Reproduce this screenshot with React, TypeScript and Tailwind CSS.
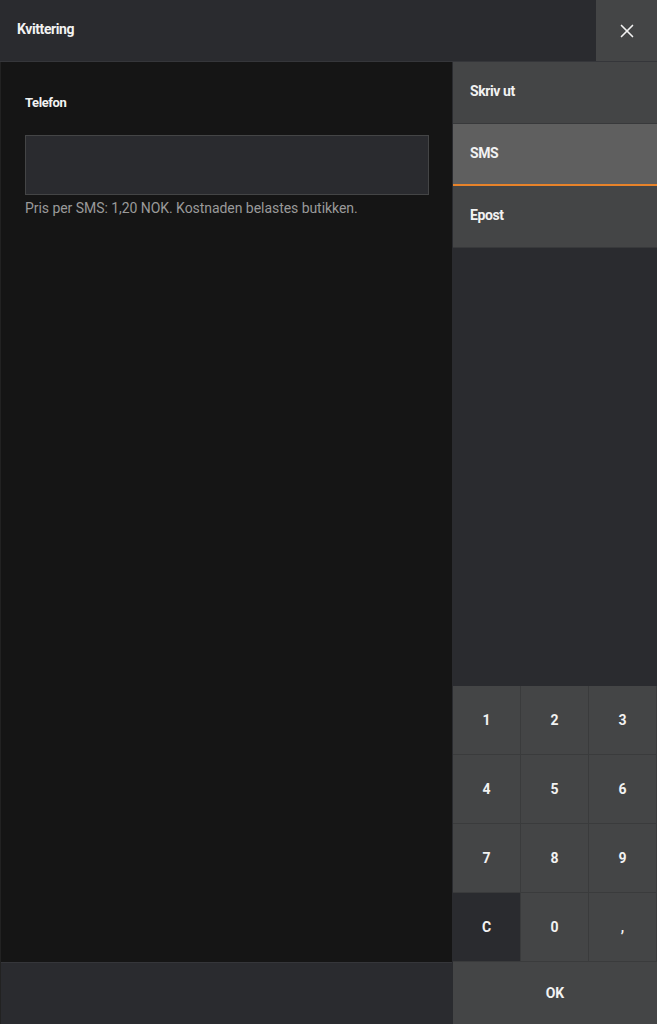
import { X } from 'lucide-react'

const keys = ['1', '2', '3', '4', '5', '6', '7', '8', '9', 'C', '0', ',']

function Tab({ label, active }: { label: string; active?: boolean }) {
  return (
    <div
      className={
        active
          ? 'flex h-[62px] items-center border-b-2 border-[#e8832a] bg-[#5f5f5f] px-[17px] pb-[2px] text-[14px] font-bold tracking-[-0.4px] text-[#f2f2f2]'
          : 'flex h-[62px] items-center border-b border-[#38393b] bg-[#444546] px-[17px] pb-[3px] text-[14px] font-bold tracking-[-0.4px] text-[#f2f2f2]'
      }
    >
      {label}
    </div>
  )
}

export default function App() {
  return (
    <div
      className="flex h-[1024px] w-[657px] flex-col bg-[#151515] text-white"
      style={{ fontFamily: 'Roboto, "Liberation Sans", sans-serif' }}
    >
      <div className="flex h-[62px] shrink-0 border-b border-[#35363a] bg-[#2a2b2f]">
        <div className="flex flex-1 items-center px-[17px] pb-[3px] text-[14px] font-bold tracking-[-0.4px] text-[#f2f2f2]">
          Kvittering
        </div>
        <button className="flex w-[61px] items-center justify-center bg-[#444546] text-[#f2f2f2]">
          <X size={22} strokeWidth={1.8} />
        </button>
      </div>

      <div className="flex min-h-0 flex-1">
        <div className="flex w-[453px] flex-col border-l border-[#222] border-r border-r-[#2a2b2f]">
          <div className="flex-1 px-6 pt-[31px]">
            <div className="text-[13px] font-bold tracking-[-0.4px] text-[#f2f2f2]">Telefon</div>
            <div className="mt-[22px] h-[60px] w-[404px] border border-[#444546] bg-[#2a2b2f]" />
            <div className="mt-[3px] text-[14px] tracking-[-0.05px] text-[#9a9a9a]">
              Pris per SMS: 1,20 NOK. Kostnaden belastes butikken.
            </div>
          </div>
          <div className="h-[62px] border-t border-[#35363a] bg-[#2a2b2f]" />
        </div>

        <div className="flex flex-1 flex-col bg-[#2a2b2f]">
          <Tab label="Skriv ut" />
          <Tab label="SMS" active />
          <Tab label="Epost" />
          <div className="flex-1" />
          <div className="grid grid-cols-3">
            {keys.map((k) => (
              <div
                key={k}
                className={
                  k === 'C'
                    ? 'flex h-[69px] items-center justify-center border-r border-b border-[#3a3b3c] bg-[#2a2b2f] text-[14px] font-bold text-[#f2f2f2]'
                    : 'flex h-[69px] items-center justify-center border-r border-b border-[#3a3b3c] bg-[#444546] text-[14px] font-bold text-[#f2f2f2]'
                }
              >
                {k}
              </div>
            ))}
          </div>
          <div className="flex h-[62px] items-center justify-center bg-[#444546] text-[14px] font-bold text-[#f2f2f2]">
            OK
          </div>
        </div>
      </div>
    </div>
  )
}
